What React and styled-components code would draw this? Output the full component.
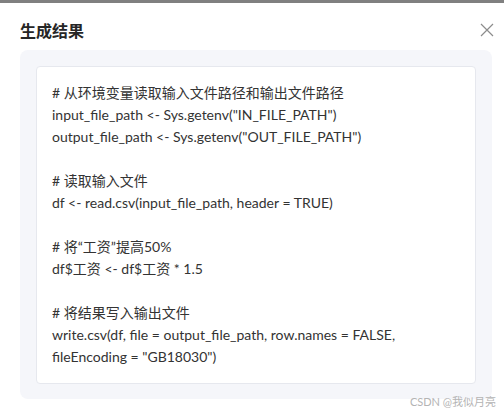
import React from "react";
import styled, { createGlobalStyle } from "styled-components";

const Global = createGlobalStyle`
  html, body { margin: 0; padding: 0; background: #fff; }
  body { font-family: "Lato", "Noto Sans CJK SC", sans-serif; }
`;

const Page = styled.div`
  width: 504px;
  height: 414px;
  box-sizing: border-box;
  border-top: 3px solid #808080;
  display: flex;
  flex-direction: column;
  position: relative;
  overflow: hidden;
`;

const Header = styled.div`
  display: flex;
  align-items: center;
  justify-content: space-between;
  height: 47px;
  padding: 0 9px 0 20px;
  box-sizing: border-box;
`;

const Title = styled.h2`
  margin: 0;
  font-size: 16px;
  font-weight: 600;
  color: #262626;
  line-height: 22px;
  margin-top: 6px;
  font-family: "Noto Sans CJK SC", sans-serif;
`;

const Close = styled.button`
  border: 0;
  background: none;
  padding: 0;
  width: 16px;
  height: 16px;
  margin-top: 6px;
  display: flex;
  align-items: center;
  justify-content: center;
  cursor: pointer;
`;

const Panel = styled.div`
  margin: 0 12px 0 20px;
  background: #f5f6fa;
  border-radius: 8px;
  padding: 16px 16px 15px 16px;
`;

const Card = styled.div`
  background: #fff;
  border: 1px solid #e6e8ee;
  border-radius: 4px;
  padding: 15px;
`;

const Line = styled.div`
  font-size: 14px;
  line-height: 22px;
  height: 22px;
  color: #333;
  white-space: pre;
  font-family: "Lato", "Noto Sans CJK SC", sans-serif;
`;

const Watermark = styled.div`
  position: absolute;
  right: 8px;
  bottom: 5px;
  font-size: 11px;
  color: #b4b4b4;
  font-family: "Lato", "Noto Sans CJK SC", sans-serif;
`;

const lines = [
  "# 从环境变量读取输入文件路径和输出文件路径",
  'input_file_path <- Sys.getenv("IN_FILE_PATH")',
  'output_file_path <- Sys.getenv("OUT_FILE_PATH")',
  "",
  "# 读取输入文件",
  "df <- read.csv(input_file_path, header = TRUE)",
  "",
  "# 将“工资”提高50%",
  "df$工资 <- df$工资 * 1.5",
  "",
  "# 将结果写入输出文件",
  "write.csv(df, file = output_file_path, row.names = FALSE,",
  'fileEncoding = "GB18030")',
];

export default function App() {
  return (
    <>
      <Global />
      <Page>
        <Header>
          <Title>生成结果</Title>
          <Close aria-label="close">
            <svg width="14" height="14" viewBox="0 0 14 14">
              <path d="M1 1 L13 13 M13 1 L1 13" stroke="#8c8c8c" strokeWidth="1.2" />
            </svg>
          </Close>
        </Header>
        <Panel>
          <Card>
            {lines.map((l, i) => (
              <Line key={i}>{l}</Line>
            ))}
          </Card>
        </Panel>
        <Watermark>CSDN @我似月亮</Watermark>
      </Page>
    </>
  );
}
